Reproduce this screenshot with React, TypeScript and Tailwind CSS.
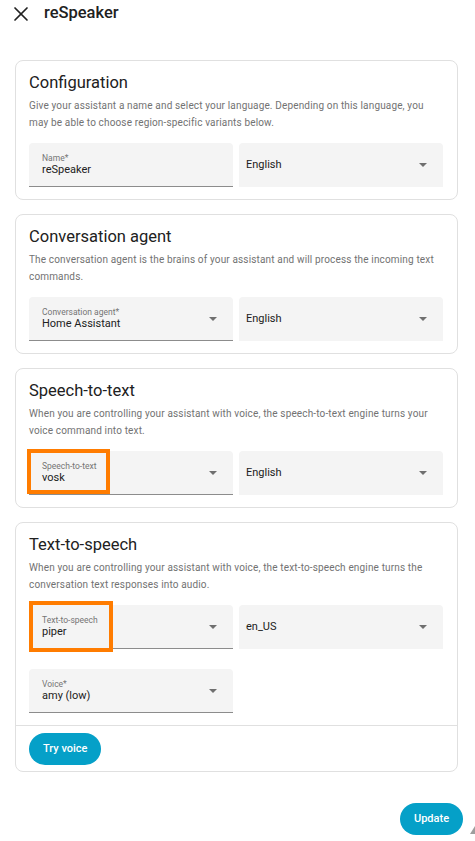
import { X } from 'lucide-react';

function Caret() {
  return (
    <svg width="8" height="4" viewBox="0 0 8 4" className="shrink-0">
      <path d="M0 0 L8 0 L4 4 Z" fill="#6f6f6f" />
    </svg>
  );
}

function Field({ label, value, underline = true }: { label?: string; value: string; underline?: boolean }) {
  return (
    <div
      className={`relative flex h-[44px] w-[204px] items-center rounded-t-[4px] bg-[#f4f4f4] ${
        underline ? 'border-b border-[#8c8c8c]' : ''
      } ${label ? 'pl-[13px]' : 'pl-[7px]'} pr-[16px]`}
    >
      <div className="flex flex-1 flex-col">
        {label && <span className="text-[8.5px] leading-[10px] text-[#757575]">{label}</span>}
        <span className="text-[11px] leading-[14px] text-[#212121]">{value}</span>
      </div>
      <Caret />
    </div>
  );
}

function TextField({ label, value }: { label: string; value: string }) {
  return (
    <div className="flex h-[44px] w-[204px] flex-col justify-center rounded-t-[4px] border-b border-[#8c8c8c] bg-[#f4f4f4] pl-[13px]">
      <span className="text-[8.5px] leading-[10px] text-[#757575]">{label}</span>
      <span className="text-[11px] leading-[14px] text-[#212121]">{value}</span>
    </div>
  );
}

function Card({ title, desc, children }: { title: string; desc: string; children: React.ReactNode }) {
  return (
    <div className="rounded-[8px] border border-[#e0e0e0] bg-white">
      <div className="px-[13px] pt-[11px] pb-[12px]">
        <h2 className="text-[16.5px] leading-[22px] text-[#212121]">{title}</h2>
        <p className="mt-[3px] text-[10px] leading-[17px] tracking-[0.15px] text-[#727272]">{desc}</p>
        <div className="mt-[12px]">{children}</div>
      </div>
    </div>
  );
}

export default function App() {
  return (
    <div className="relative h-[841px] w-[475px] overflow-hidden bg-white" style={{ fontFamily: 'Roboto, "Noto Sans", sans-serif' }}>
      {/* Header */}
      <div className="flex h-[27px] items-center pl-[9px]">
        <X className="h-6 w-6 text-[#212121]" strokeWidth={1.7} />
        <span className="ml-[11px] text-[16.5px] font-medium text-[#212121]">reSpeaker</span>
      </div>

      <div className="mt-[33px] ml-[15px] flex w-[443px] flex-col gap-[14px]">
        <Card
          title="Configuration"
          desc="Give your assistant a name and select your language. Depending on this language, you may be able to choose region-specific variants below."
        >
          <div className="flex gap-[6px]">
            <TextField label="Name*" value="reSpeaker" />
            <Field value="English" underline={false} />
          </div>
        </Card>

        <Card
          title="Conversation agent"
          desc="The conversation agent is the brains of your assistant and will process the incoming text commands."
        >
          <div className="flex gap-[6px]">
            <Field label="Conversation agent*" value="Home Assistant" />
            <Field value="English" underline={false} />
          </div>
        </Card>

        <Card
          title="Speech-to-text"
          desc="When you are controlling your assistant with voice, the speech-to-text engine turns your voice command into text."
        >
          <div className="relative flex gap-[6px]">
            <Field label="Speech-to-text" value="vosk" />
            <Field value="English" underline={false} />
            <div className="absolute left-[-2px] top-[-2px] h-[45px] w-[83px] border-[4px] border-[#ff7c00]" />
          </div>
        </Card>

        <div className="rounded-[8px] border border-[#e0e0e0] bg-white">
          <div className="px-[13px] pt-[11px] pb-[12px]">
            <h2 className="text-[16.5px] leading-[22px] text-[#212121]">Text-to-speech</h2>
            <p className="mt-[3px] text-[10px] leading-[17px] tracking-[0.15px] text-[#727272]">
              When you are controlling your assistant with voice, the text-to-speech engine turns the conversation text responses into audio.
            </p>
            <div className="relative mt-[12px] flex gap-[6px]">
              <Field label="Text-to-speech" value="piper" />
              <Field value="en_US" underline={false} />
              <div className="absolute left-0 top-[-4px] h-[51px] w-[84px] border-[4px] border-[#ff7c00]" />
            </div>
            <div className="mt-[20px]">
              <Field label="Voice*" value="amy (low)" />
            </div>
          </div>
          <div className="border-t border-[#e0e0e0] px-[13px] pt-[7px] pb-[6px]">
            <button className="h-[32px] rounded-full bg-[#05a0c8] px-[14px] text-[11px] font-medium text-white">
              Try voice
            </button>
          </div>
        </div>
      </div>

      <div className="mt-[31px] flex justify-end pr-[12px]">
        <button className="h-[32px] w-[63px] rounded-full bg-[#05a0c8] text-[11px] font-medium text-white">Update</button>
      </div>

      <svg className="absolute right-0 bottom-[7px]" width="5" height="8" viewBox="0 0 5 8">
        <path d="M5 0 L5 8 L0 8 Z" fill="#9e9e9e" />
      </svg>
    </div>
  );
}
